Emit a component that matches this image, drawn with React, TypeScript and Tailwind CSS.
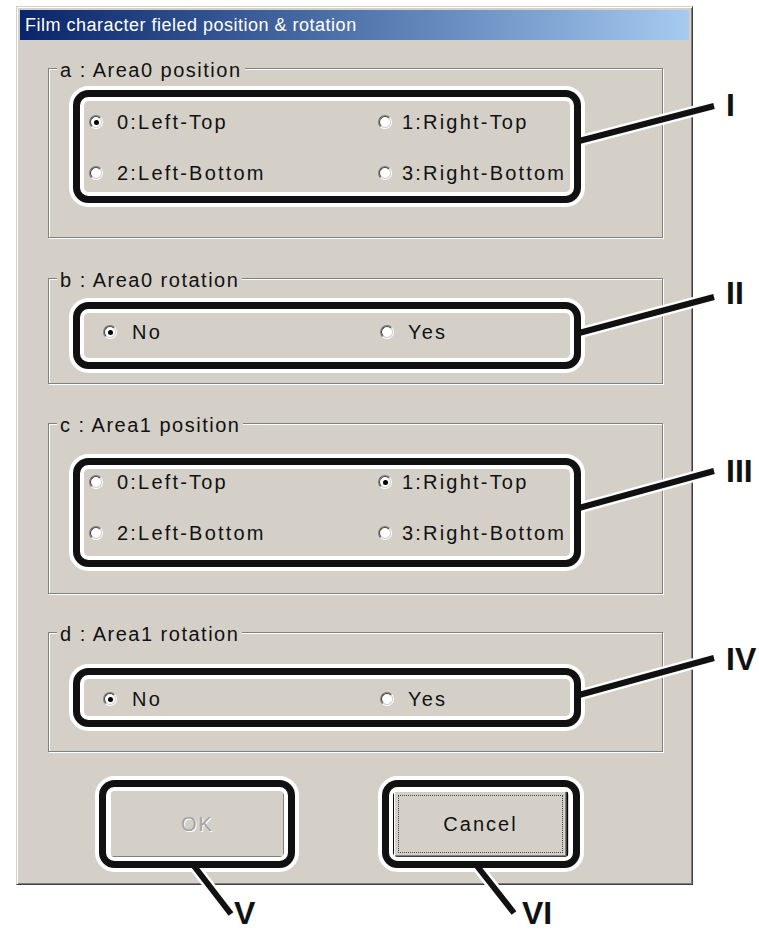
import React from "react";

function Radio({ checked }: { checked?: boolean }) {
  return (
    <span className="inline-block w-[14px] h-[14px] shrink-0 rounded-full border border-t-[#808080] border-l-[#808080] border-r-white border-b-white">
      <span className="flex items-center justify-center w-full h-full rounded-full border border-t-[#404040] border-l-[#404040] border-r-[#d4d0c8] border-b-[#d4d0c8] bg-white">
        {checked ? <span className="block w-[5px] h-[5px] rounded-full bg-black" /> : null}
      </span>
    </span>
  );
}

function Option({ label, checked, gap }: { label: string; checked?: boolean; gap: string }) {
  return (
    <label className={"flex items-center " + gap}>
      <Radio checked={checked} />
      <span className="tracking-[2.2px] leading-[24px]">{label}</span>
    </label>
  );
}

function Legend({ text }: { text: string }) {
  return (
    <span className="absolute left-[8px] -top-[10px] px-[3px] bg-[#d4d0c8] leading-[22px] tracking-[1.5px] whitespace-nowrap">
      {text}
    </span>
  );
}

const groupBase =
  "relative ml-[28px] w-[615px] border border-[#808080] shadow-[inset_1px_1px_0_#fff,1px_1px_0_#fff]";

function PositionRows({ sel }: { sel: number }) {
  return (
    <div className="flex flex-col gap-[27px] pl-[40px]">
      <div className="flex h-[24px] items-center">
        <div className="w-[289px]">
          <Option label="0:Left-Top" checked={sel === 0} gap="gap-[14px]" />
        </div>
        <Option label="1:Right-Top" checked={sel === 1} gap="gap-[10px]" />
      </div>
      <div className="flex h-[24px] items-center">
        <div className="w-[289px]">
          <Option label="2:Left-Bottom" checked={sel === 2} gap="gap-[14px]" />
        </div>
        <Option label="3:Right-Bottom" checked={sel === 3} gap="gap-[10px]" />
      </div>
    </div>
  );
}

function RotationRow() {
  return (
    <div className="flex h-[24px] items-center pl-[54px]">
      <div className="w-[277px]">
        <Option label="No" checked gap="gap-[15px]" />
      </div>
      <Option label="Yes" gap="gap-[14px]" />
    </div>
  );
}

const boxes = [
  { x: 76.5, y: 93.5, w: 501, h: 106 },
  { x: 76.5, y: 305.5, w: 501, h: 60 },
  { x: 76.5, y: 461.5, w: 501, h: 102 },
  { x: 76.5, y: 671.5, w: 501, h: 52 },
  { x: 102.5, y: 783.5, w: 189, h: 81 },
  { x: 385.5, y: 783.5, w: 191, h: 81 },
];

const lines = [
  { x1: 579, y1: 141, x2: 714, y2: 106 },
  { x1: 579, y1: 333, x2: 714, y2: 297 },
  { x1: 579, y1: 508, x2: 714, y2: 471 },
  { x1: 579, y1: 695, x2: 714, y2: 658 },
  { x1: 194, y1: 866, x2: 231, y2: 914 },
  { x1: 477, y1: 866, x2: 514, y2: 913 },
];

export default function App() {
  return (
    <div className="relative w-[759px] h-[931px] overflow-hidden bg-white pt-[6px] pl-[16px] font-['Liberation_Sans',Arial,sans-serif] text-[20px] text-[#111]">
      <div className="w-[677px] bg-[#d4d0c8] border border-t-[#d4d0c8] border-l-[#d4d0c8] border-r-[#404040] border-b-[#404040] shadow-[inset_1px_1px_0_#fff,inset_-1px_-1px_0_#808080] p-[3px]">
        <div className="h-[30px] flex items-center pl-[5px] pt-[1px] bg-linear-to-r from-[#0a246a] to-[#a6caf0] text-white text-[18px] tracking-[0.5px] whitespace-nowrap">
          Film character fieled position &amp; rotation
        </div>

        <div className={groupBase + " mt-[28px] h-[170px] pt-[41px]"}>
          <Legend text="a : Area0 position" />
          <PositionRows sel={0} />
        </div>

        <div className={groupBase + " mt-[40px] h-[106px] pt-[41px]"}>
          <Legend text="b : Area0 rotation" />
          <RotationRow />
        </div>

        <div className={groupBase + " mt-[39px] h-[171px] pt-[46px]"}>
          <Legend text="c : Area1 position" />
          <PositionRows sel={1} />
        </div>

        <div className={groupBase + " mt-[38px] h-[120px] pt-[54px]"}>
          <Legend text="d : Area1 rotation" />
          <RotationRow />
        </div>

        <div className="mt-[38px] mb-[23px] ml-[90px] flex gap-[108px]">
          <button className="w-[175px] h-[68px] bg-[#d4d0c8] border border-t-white border-l-white border-r-[#404040] border-b-[#404040] shadow-[inset_-1px_-1px_0_#808080] text-[#a3a3a3] tracking-[2px] [text-shadow:1px_1px_0_#fff]">
            OK
          </button>
          <button className="w-[175px] h-[68px] bg-[#d4d0c8] border border-black p-0">
            <div className="h-full border border-t-white border-l-white border-r-[#404040] border-b-[#404040] shadow-[inset_-1px_-1px_0_#808080] p-[3px]">
              <div className="h-full flex items-center justify-center border border-dotted border-[#444] tracking-[2px]">
                Cancel
              </div>
            </div>
          </button>
        </div>
      </div>

      <svg className="absolute left-0 top-0 pointer-events-none" width={759} height={931}>
        {boxes.map((b, i) => (
          <rect key={"hw" + i} x={b.x} y={b.y} width={b.w} height={b.h} rx={12} fill="none" stroke="#fff" strokeWidth={15} />
        ))}
        {lines.map((l, i) => (
          <line key={"lw" + i} x1={l.x1} y1={l.y1} x2={l.x2} y2={l.y2} stroke="#fff" strokeWidth={11} />
        ))}
        {lines.map((l, i) => (
          <line key={"lb" + i} x1={l.x1} y1={l.y1} x2={l.x2} y2={l.y2} stroke="#111" strokeWidth={6} />
        ))}
        {boxes.map((b, i) => (
          <rect key={"hb" + i} x={b.x} y={b.y} width={b.w} height={b.h} rx={12} fill="none" stroke="#111" strokeWidth={7} />
        ))}
      </svg>

      <span className="absolute left-[726px] top-[89px] text-[32px] font-bold leading-none text-[#111]">I</span>
      <span className="absolute left-[726px] top-[277px] text-[32px] font-bold leading-none text-[#111]">II</span>
      <span className="absolute left-[726px] top-[455px] text-[32px] font-bold leading-none text-[#111]">III</span>
      <span className="absolute left-[726px] top-[643px] text-[32px] font-bold leading-none text-[#111]">IV</span>
      <span className="absolute left-[234px] top-[897px] text-[32px] font-bold leading-none text-[#111]">V</span>
      <span className="absolute left-[522px] top-[897px] text-[32px] font-bold leading-none text-[#111]">VI</span>
    </div>
  );
}
